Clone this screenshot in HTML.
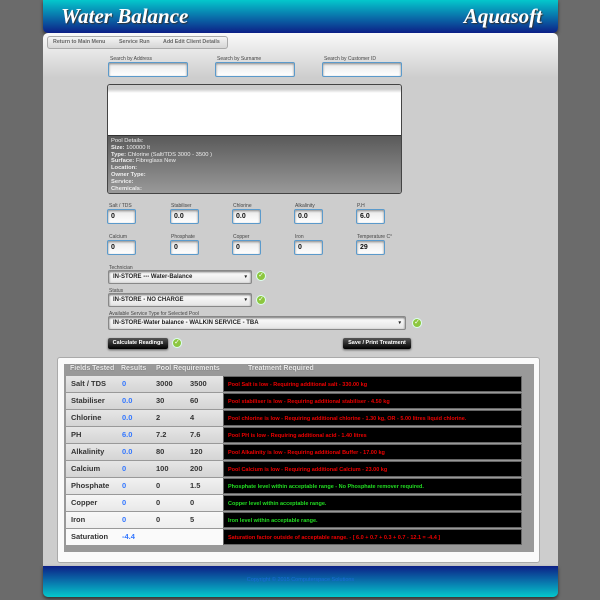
<!DOCTYPE html><html><head><style>
*{margin:0;padding:0;box-sizing:border-box}
body{width:600px;height:600px;background:#6b6b6b;position:relative;overflow:hidden;font-family:"Liberation Sans",sans-serif}
.a{position:absolute}
.hdr{left:43px;top:0;width:515px;height:33px;background:linear-gradient(#04c8cc,#0a6aa8 55%,#0c1f86);border-radius:0 0 5px 5px;box-shadow:0 2px 3px #333}
.hdr span{position:absolute;top:4px;color:#fff;font-family:"Liberation Serif",serif;font-style:italic;font-weight:bold;font-size:21px;text-shadow:1px 1px 1px #333}
.main{left:43px;top:33px;width:515px;height:534px;background:linear-gradient(#fafafa,#cdcdcd 45px,#cdcdcd);border-radius:5px 5px 0 0}
.nav{left:47px;top:36px;width:181px;height:13px;border:1px solid #aaa;border-radius:3px;background:linear-gradient(#f4f4f4,#d6d6d6);font-size:5.3px;color:#666;font-weight:bold;line-height:11px;white-space:nowrap}
.nav span{position:absolute;top:0}
.lbl{font-size:5px;color:#444;white-space:nowrap}
.in{background:linear-gradient(#e8e8e8,#fff);border:1px solid #5b9acb;border-radius:2px;box-shadow:inset 0 1px 2px #888;font-size:7px;font-weight:bold;color:#111;padding-left:3px;line-height:13px}
.sel{background:linear-gradient(#fff,#e4e4e4);border:1px solid #888;border-radius:2px;font-size:6px;font-weight:bold;color:#222;padding:3px 4px;box-shadow:inset 0 1px 2px #666}
.sel:after{content:"▾";position:absolute;right:4px;top:3px;font-size:5px}
.ck{width:10px;height:10px;border-radius:50%;background:#8dc63f;border:1px solid #dfe;color:#fff;font-size:7px;line-height:8px;text-align:center}
.btn{background:linear-gradient(#555,#000);border-radius:2px;color:#fff;font-size:5.5px;font-weight:bold;text-align:center;line-height:11px;box-shadow:0 1px 2px #555}
.td{position:absolute;height:16px;font-size:7.5px;font-weight:bold;line-height:16px;white-space:nowrap;overflow:hidden}
.lc{left:66px;width:158px;background:linear-gradient(#e6e6e6,#d4d4d4);color:#333}
.rc{left:223px;width:299px;background:#000;border:1px solid #666;font-size:5.5px;padding-left:4px}
.lc span{position:absolute;top:0}
</style></head><body>
<div class="a hdr"><span style="left:18px">Water Balance</span><span style="right:16px">Aquasoft</span></div>
<div class="a main"></div>
<div class="a nav"><span style="left:5px">Return to Main Menu</span><span style="left:71px">Service Run</span><span style="left:115px">Add Edit Client Details</span></div>
<div class="a lbl" style="left:110px;top:56px">Search by Address</div>
<div class="a lbl" style="left:217px;top:56px">Search by Surname</div>
<div class="a lbl" style="left:324px;top:56px">Search by Customer ID</div>
<div class="a in" style="left:108px;top:62px;width:80px;height:15px"></div>
<div class="a in" style="left:215px;top:62px;width:80px;height:15px"></div>
<div class="a in" style="left:322px;top:62px;width:80px;height:15px"></div>
<div class="a" style="left:107px;top:84px;width:295px;height:110px;border:1px solid #444;border-radius:3px;overflow:hidden">
<div style="height:51px;background:linear-gradient(#ccc 4px,#fff 8px,#fff);border-bottom:1px solid #333"></div>
<div style="height:58px;background:linear-gradient(#5a5a5a,#9a9a9a);color:#eee;font-size:5.8px;line-height:6.8px;padding:2px 3px">Pool Details:<br><b>Size:</b> 100000 lt<br><b>Type:</b> Chlorine (Salt/TDS 3000 - 3500 )<br><b>Surface:</b> Fibreglass New<br><b>Location:</b><br><b>Owner Type:</b><br><b>Service:</b><br><b>Chemicals:</b></div></div>
<div class="a lbl" style="left:109px;top:203px">Salt / TDS</div><div class="a in" style="left:107px;top:209px;width:29px;height:15px">0</div>
<div class="a lbl" style="left:171px;top:203px">Stabiliser</div><div class="a in" style="left:170px;top:209px;width:29px;height:15px">0.0</div>
<div class="a lbl" style="left:233px;top:203px">Chlorine</div><div class="a in" style="left:232px;top:209px;width:29px;height:15px">0.0</div>
<div class="a lbl" style="left:295px;top:203px">Alkalinity</div><div class="a in" style="left:294px;top:209px;width:29px;height:15px">0.0</div>
<div class="a lbl" style="left:357px;top:203px">P.H</div><div class="a in" style="left:356px;top:209px;width:29px;height:15px">6.0</div>
<div class="a lbl" style="left:109px;top:234px">Calcium</div><div class="a in" style="left:107px;top:240px;width:29px;height:15px">0</div>
<div class="a lbl" style="left:171px;top:234px">Phosphate</div><div class="a in" style="left:170px;top:240px;width:29px;height:15px">0</div>
<div class="a lbl" style="left:233px;top:234px">Copper</div><div class="a in" style="left:232px;top:240px;width:29px;height:15px">0</div>
<div class="a lbl" style="left:295px;top:234px">Iron</div><div class="a in" style="left:294px;top:240px;width:29px;height:15px">0</div>
<div class="a lbl" style="left:357px;top:234px">Temperature C°</div><div class="a in" style="left:356px;top:240px;width:29px;height:15px">29</div>
<div class="a lbl" style="left:109px;top:265px">Technician</div>
<div class="a sel" style="left:108px;top:270px;width:144px;height:14px">IN-STORE --- Water-Balance</div><div class="a ck" style="left:256px;top:271px">✓</div>
<div class="a lbl" style="left:109px;top:288px">Status</div>
<div class="a sel" style="left:108px;top:293px;width:144px;height:14px">IN-STORE - NO CHARGE</div><div class="a ck" style="left:256px;top:295px">✓</div>
<div class="a lbl" style="left:109px;top:311px">Available Service Type for Selected Pool</div>
<div class="a sel" style="left:108px;top:316px;width:298px;height:14px">IN-STORE-Water balance - WALKIN SERVICE - TBA</div><div class="a ck" style="left:412px;top:318px">✓</div>
<div class="a btn" style="left:108px;top:338px;width:60px;height:11px">Calculate Readings</div><div class="a ck" style="left:172px;top:338px">✓</div>
<div class="a btn" style="left:343px;top:338px;width:68px;height:11px">Save / Print Treatment</div>
<div class="a" style="left:57px;top:357px;width:483px;height:206px;background:#fafafa;border:1px solid #aaa;border-radius:3px"></div>
<div class="a" style="left:64px;top:364px;width:470px;height:188px;background:#999"></div>
<div class="a" style="top:365px;left:70px;font-size:7px;font-weight:bold;color:#eee;text-shadow:0 0 1px #555;white-space:pre"><span class="a" style="left:0">Fields Tested</span><span class="a" style="left:51px">Results</span><span class="a" style="left:86px">Pool Requirements</span><span class="a" style="left:178px">Treatment Required</span></div>
<div class="td lc" style="top:376px"><span style="left:5px">Salt / TDS</span><span style="left:56px;color:#37f">0</span><span style="left:90px">3000</span><span style="left:124px">3500</span></div><div class="td rc" style="top:376px;color:#e00">Pool Salt is low - Requiring additional salt - 330.00 kg</div>
<div class="td lc" style="top:393px"><span style="left:5px">Stabiliser</span><span style="left:56px;color:#37f">0.0</span><span style="left:90px">30</span><span style="left:124px">60</span></div><div class="td rc" style="top:393px;color:#e00">Pool stabiliser is low - Requiring additional stabiliser - 4.50 kg</div>
<div class="td lc" style="top:410px"><span style="left:5px">Chlorine</span><span style="left:56px;color:#37f">0.0</span><span style="left:90px">2</span><span style="left:124px">4</span></div><div class="td rc" style="top:410px;color:#e00">Pool chlorine is low - Requiring additional chlorine - 1.30 kg, OR - 5.00 litres liquid chlorine.</div>
<div class="td lc" style="top:427px"><span style="left:5px">PH</span><span style="left:56px;color:#37f">6.0</span><span style="left:90px">7.2</span><span style="left:124px">7.6</span></div><div class="td rc" style="top:427px;color:#e00">Pool PH is low - Requiring additional acid - 1.40 litres</div>
<div class="td lc" style="top:444px"><span style="left:5px">Alkalinity</span><span style="left:56px;color:#37f">0.0</span><span style="left:90px">80</span><span style="left:124px">120</span></div><div class="td rc" style="top:444px;color:#e00">Pool Alkalinity is low - Requiring additional Buffer - 17.00 kg</div>
<div class="td lc" style="top:461px"><span style="left:5px">Calcium</span><span style="left:56px;color:#37f">0</span><span style="left:90px">100</span><span style="left:124px">200</span></div><div class="td rc" style="top:461px;color:#e00">Pool Calcium is low - Requiring additional Calcium - 23.00 kg</div>
<div class="td lc" style="top:478px;background:linear-gradient(#f2f2f2,#e2e2e2)"><span style="left:5px">Phosphate</span><span style="left:56px;color:#37f">0</span><span style="left:90px">0</span><span style="left:124px">1.5</span></div><div class="td rc" style="top:478px;color:#2d2">Phosphate level within acceptable range - No Phosphate remover required.</div>
<div class="td lc" style="top:495px;background:linear-gradient(#f6f6f6,#e8e8e8)"><span style="left:5px">Copper</span><span style="left:56px;color:#37f">0</span><span style="left:90px">0</span><span style="left:124px">0</span></div><div class="td rc" style="top:495px;color:#2d2">Copper level within acceptable range.</div>
<div class="td lc" style="top:512px;background:linear-gradient(#f8f8f8,#eee)"><span style="left:5px">Iron</span><span style="left:56px;color:#37f">0</span><span style="left:90px">0</span><span style="left:124px">5</span></div><div class="td rc" style="top:512px;color:#2d2">Iron level within acceptable range.</div>
<div class="td lc" style="top:529px;background:#fafafa"><span style="left:5px">Saturation</span><span style="left:56px;color:#37f">-4.4</span></div><div class="td rc" style="top:529px;color:#e00">Saturation factor outside of acceptable range. - [ 6.0 + 0.7 + 0.3 + 0.7 - 12.1 = -4.4 ]</div>
<div class="a" style="left:43px;top:566px;width:515px;height:31px;background:linear-gradient(#0c1f86,#0a6aa8 45%,#04c8cc);border-radius:0 0 5px 5px;box-shadow:0 2px 3px #333;text-align:center;font-size:5.5px;color:#1a6cd8;line-height:28px">Copyright © 2015 Computerspace Solutions</div>
</body></html>
